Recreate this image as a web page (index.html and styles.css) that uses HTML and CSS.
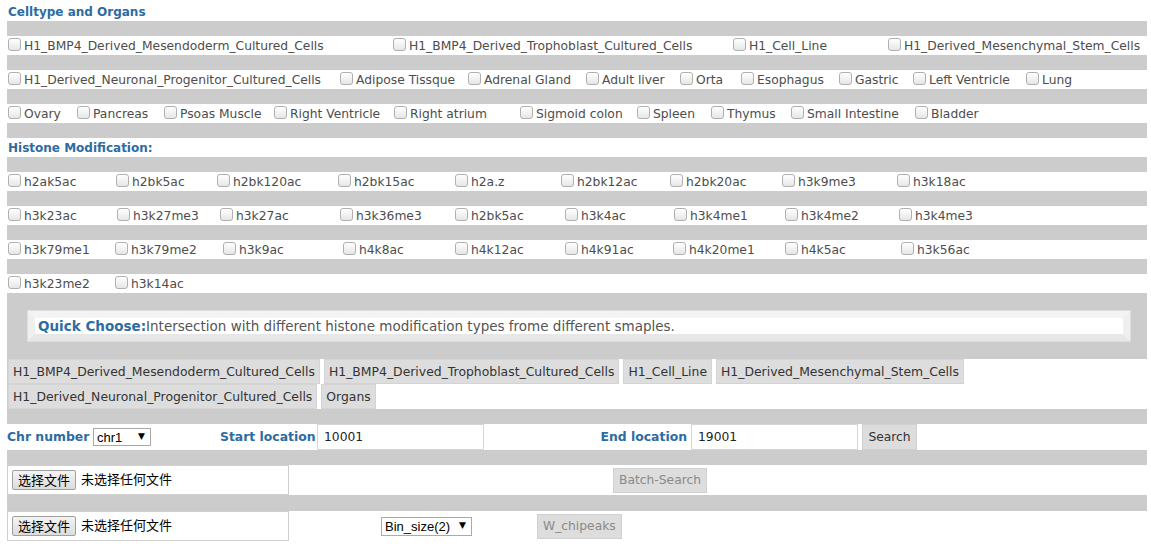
FILE: index.html
```html
<!DOCTYPE html>
<html lang="en">
<head>
<meta charset="utf-8">
<title>Search</title>
<link rel="stylesheet" href="styles.css">
</head>
<body>
<div class="page">
  <div class="title t-first">Celltype and Organs</div>
  <div class="sep"></div>
  <div class="row c1">
    <label class="item"><input type="checkbox" class="cb">H1_BMP4_Derived_Mesendoderm_Cultured_Cells</label>
    <label class="item"><input type="checkbox" class="cb">H1_BMP4_Derived_Trophoblast_Cultured_Cells</label>
    <label class="item"><input type="checkbox" class="cb">H1_Cell_Line</label>
    <label class="item"><input type="checkbox" class="cb">H1_Derived_Mesenchymal_Stem_Cells</label>
  </div>
  <div class="sep"></div>
  <div class="row c2">
    <label class="item"><input type="checkbox" class="cb">H1_Derived_Neuronal_Progenitor_Cultured_Cells</label>
    <label class="item"><input type="checkbox" class="cb">Adipose Tissque</label>
    <label class="item"><input type="checkbox" class="cb">Adrenal Gland</label>
    <label class="item"><input type="checkbox" class="cb">Adult liver</label>
    <label class="item"><input type="checkbox" class="cb">Orta</label>
    <label class="item"><input type="checkbox" class="cb">Esophagus</label>
    <label class="item"><input type="checkbox" class="cb">Gastric</label>
    <label class="item"><input type="checkbox" class="cb">Left Ventricle</label>
    <label class="item"><input type="checkbox" class="cb">Lung</label>
  </div>
  <div class="sep"></div>
  <div class="row c3">
    <label class="item"><input type="checkbox" class="cb">Ovary</label>
    <label class="item"><input type="checkbox" class="cb">Pancreas</label>
    <label class="item"><input type="checkbox" class="cb">Psoas Muscle</label>
    <label class="item"><input type="checkbox" class="cb">Right Ventricle</label>
    <label class="item"><input type="checkbox" class="cb">Right atrium</label>
    <label class="item"><input type="checkbox" class="cb">Sigmoid colon</label>
    <label class="item"><input type="checkbox" class="cb">Spleen</label>
    <label class="item"><input type="checkbox" class="cb">Thymus</label>
    <label class="item"><input type="checkbox" class="cb">Small Intestine</label>
    <label class="item"><input type="checkbox" class="cb">Bladder</label>
  </div>
  <div class="sep"></div>
  <div class="title t-second">Histone Modification:</div>
  <div class="sep"></div>
  <div class="row h1">
    <label class="item"><input type="checkbox" class="cb">h2ak5ac</label>
    <label class="item"><input type="checkbox" class="cb">h2bk5ac</label>
    <label class="item"><input type="checkbox" class="cb">h2bk120ac</label>
    <label class="item"><input type="checkbox" class="cb">h2bk15ac</label>
    <label class="item"><input type="checkbox" class="cb">h2a.z</label>
    <label class="item"><input type="checkbox" class="cb">h2bk12ac</label>
    <label class="item"><input type="checkbox" class="cb">h2bk20ac</label>
    <label class="item"><input type="checkbox" class="cb">h3k9me3</label>
    <label class="item"><input type="checkbox" class="cb">h3k18ac</label>
  </div>
  <div class="sep"></div>
  <div class="row h2">
    <label class="item"><input type="checkbox" class="cb">h3k23ac</label>
    <label class="item"><input type="checkbox" class="cb">h3k27me3</label>
    <label class="item"><input type="checkbox" class="cb">h3k27ac</label>
    <label class="item"><input type="checkbox" class="cb">h3k36me3</label>
    <label class="item"><input type="checkbox" class="cb">h2bk5ac</label>
    <label class="item"><input type="checkbox" class="cb">h3k4ac</label>
    <label class="item"><input type="checkbox" class="cb">h3k4me1</label>
    <label class="item"><input type="checkbox" class="cb">h3k4me2</label>
    <label class="item"><input type="checkbox" class="cb">h3k4me3</label>
  </div>
  <div class="sep"></div>
  <div class="row h3">
    <label class="item"><input type="checkbox" class="cb">h3k79me1</label>
    <label class="item"><input type="checkbox" class="cb">h3k79me2</label>
    <label class="item"><input type="checkbox" class="cb">h3k9ac</label>
    <label class="item"><input type="checkbox" class="cb">h4k8ac</label>
    <label class="item"><input type="checkbox" class="cb">h4k12ac</label>
    <label class="item"><input type="checkbox" class="cb">h4k91ac</label>
    <label class="item"><input type="checkbox" class="cb">h4k20me1</label>
    <label class="item"><input type="checkbox" class="cb">h4k5ac</label>
    <label class="item"><input type="checkbox" class="cb">h3k56ac</label>
  </div>
  <div class="sep"></div>
  <div class="row h4">
    <label class="item"><input type="checkbox" class="cb">h3k23me2</label>
    <label class="item"><input type="checkbox" class="cb">h3k14ac</label>
  </div>
  <div class="quick-wrap">
    <div class="quick"><b class="quick-label">Quick Choose:</b>Intersection with different histone modification types frome different smaples.</div>
  </div>
  <div class="qbtns">
    <button class="qbtn">H1_BMP4_Derived_Mesendoderm_Cultured_Cells</button>
    <button class="qbtn">H1_BMP4_Derived_Trophoblast_Cultured_Cells</button>
    <button class="qbtn">H1_Cell_Line</button>
    <button class="qbtn">H1_Derived_Mesenchymal_Stem_Cells</button>
    <button class="qbtn">H1_Derived_Neuronal_Progenitor_Cultured_Cells</button>
    <button class="qbtn">Organs</button>
  </div>
  <div class="sep"></div>
  <div class="loc-row">
    <span class="flabel">Chr number</span>
    <span class="sel sel-chr"><select class="select"><option>chr1</option></select></span>
    <span class="flabel right">Start location</span>
    <input class="tinput" type="text" value="10001">
    <span class="flabel right end-label">End location</span>
    <input class="tinput" type="text" value="19001">
    <button class="gbtn search">Search</button>
  </div>
  <div class="sep"></div>
  <div class="file-row batch">
    <div class="filebox"><button class="fbtn">选择文件</button><span class="ftext">未选择任何文件</span></div>
    <span></span>
    <button class="gbtn dis">Batch-Search</button>
  </div>
  <div class="sep sep16"></div>
  <div class="file-row chip">
    <div class="filebox"><button class="fbtn">选择文件</button><span class="ftext">未选择任何文件</span></div>
    <span></span>
    <span class="sel sel-bin"><select class="select"><option>Bin_size(2)</option></select></span>
    <span></span>
    <button class="gbtn dis chipbtn">W_chipeaks</button>
  </div>
</div>
</body>
</html>
```

FILE: styles.css
```css
* { box-sizing: border-box; }
body {
  margin: 0;
  background: #fff;
  font-family: "DejaVu Sans", Verdana, sans-serif;
  font-size: 12.3px;
  color: #4d4d4d;
}
.page {
  margin-left: 7px;
  width: 1140px;
}
.title {
  display: flex;
  align-items: center;
  padding-left: 1px;
  font-weight: bold;
  font-size: 12px;
  color: #2d6ca2;
}
.t-first { height: 21px; padding-top: 3px; }
.t-second { height: 19px; padding-top: 1px; }
.sep { height: 15px; background: #ccc; }
.sep16 { height: 16px; }
.row {
  height: 19px;
  display: grid;
  align-items: center;
  padding-left: 1px;
}
.item {
  display: flex;
  align-items: center;
  white-space: nowrap;
}
.cb {
  appearance: none;
  -webkit-appearance: none;
  width: 13px;
  height: 13px;
  margin: 0 3px 2px 0;
  border: 1px solid #b0b0b0;
  border-radius: 3px;
  background: linear-gradient(#ffffff, #e6e6e6);
  flex: none;
}
.c1 { grid-template-columns: 385px 340px 155px auto; }
.c2 { grid-template-columns: 332px 128px 118px 94px 61px 98px 74px 113px auto; }
.c3 { grid-template-columns: 69px 87px 110px 120px 126px 117px 74px 80px 124px auto; }
.h1 { grid-template-columns: 108px 101px 121px 117px 106px 109px 112px 115px auto; }
.h2 { grid-template-columns: 109px 103px 120px 115px 110px 109px 111px 114px auto; }
.h3 { grid-template-columns: 107px 108px 120px 112px 110px 108px 112px 116px auto; }
.h4 { grid-template-columns: 107px auto; }

.quick-wrap {
  background: #ccc;
  padding: 17px 16px 17px 20px;
}
.quick {
  height: 32px;
  border: 8px solid #efefef;
  border-top-color: #f4f4f4;
  border-bottom-color: #e7e7e7;
  outline: 1px solid #dedede;
  outline-offset: -1px;
  background: #fff;
  padding-left: 2px;
  font-size: 13.5px;
  line-height: 16px;
  color: #555;
  white-space: nowrap;
}
.quick-label { color: #2d6ca2; padding-left: 1px; }

.qbtns {
  display: flex;
  flex-wrap: wrap;
  column-gap: 4px;
  border-left: 1px solid #ccc;
  background: #fff;
  width: 1000px;
}
.qbtn {
  height: 25px;
  padding: 0 4px 0 4px;
  margin: 0;
  border: 1px solid #d4d4d4;
  background: #dddddd;
  font-family: "DejaVu Sans", Verdana, sans-serif;
  font-size: 12.4px;
  color: #333;
}

.loc-row {
  height: 26px;
  display: grid;
  grid-template-columns: 86px 127px 97px 167px 207px 167px 4px auto;
  align-items: center;
}
.loc-row .search { grid-column: 8; }
.flabel {
  font-weight: bold;
  font-size: 12.4px;
  color: #2d6ca2;
  white-space: nowrap;
  padding-bottom: 2px;
}
.flabel.right { text-align: right; padding-right: 4px; }
.end-label { padding-right: 3px; }
.tinput {
  height: 26px;
  width: 167px;
  margin: 0;
  border: 1px solid #d6d6d6;
  padding: 0 0 1px 6px;
  font-family: "DejaVu Sans", Verdana, sans-serif;
  font-size: 12.3px;
  color: #222;
  background: #fff;
}
.gbtn {
  height: 26px;
  margin: 0;
  padding: 0 5px 1px;
  border: 1px solid #d0d0d0;
  background: #dddddd;
  font-family: "DejaVu Sans", Verdana, sans-serif;
  font-size: 12.3px;
  color: #333;
  justify-self: start;
}
.gbtn.dis { color: #8a8a8a; height: 25px; }
.search { width: 55px; }

.sel {
  position: relative;
  display: inline-block;
  justify-self: start;
}
.sel::after {
  content: "\25BC";
  position: absolute;
  right: 6px;
  top: 3px;
  font-size: 9px;
  color: #000;
  pointer-events: none;
  font-family: "DejaVu Sans", sans-serif;
}
.select {
  appearance: none;
  -webkit-appearance: none;
  height: 18px;
  margin: 0;
  border: 1px solid #a9a9a9;
  border-radius: 0;
  background: #fff;
  padding: 0 0 0 3px;
  font-family: "Liberation Sans", Arial, sans-serif;
  font-size: 13px;
  color: #000;
  display: block;
}
.sel-chr .select { width: 58px; }
.sel-bin .select { width: 91px; height: 19px; }

.file-row {
  height: 30px;
  display: grid;
  align-items: center;
}
.batch { grid-template-columns: 282px 324px auto; }
.chip { grid-template-columns: 282px 92px 91px 65px auto; }
.filebox {
  height: 30px;
  border: 1px solid #cfcfcf;
  display: flex;
  align-items: center;
  padding-left: 4px;
  background: #fff;
}
.fbtn {
  height: 20px;
  width: 64px;
  margin: 0 5px 0 0;
  padding: 0;
  border: 1px solid #a0a0a0;
  border-radius: 2px;
  background: linear-gradient(#f4f4f4, #dcdcdc);
  font-family: "Noto Sans CJK SC", sans-serif;
  font-size: 13px;
  color: #000;
  line-height: 18px;
}
.ftext {
  font-family: "Noto Sans CJK SC", sans-serif;
  font-size: 13px;
  line-height: 16px;
  color: #000;
  padding-bottom: 2px;
}
.chipbtn { height: 26px; }
```
